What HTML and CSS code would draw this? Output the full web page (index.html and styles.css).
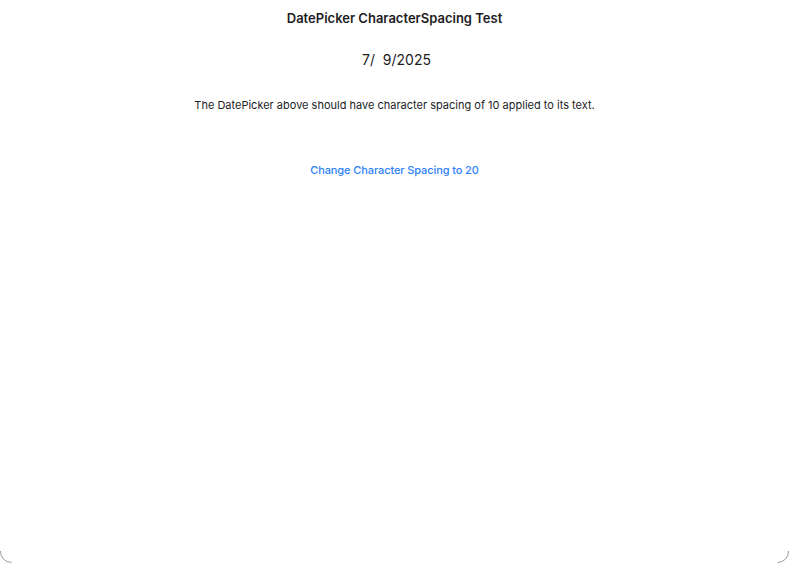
FILE: index.html
```html
<!DOCTYPE html>
<html lang="en">
<head>
<meta charset="utf-8">
<title>DatePicker CharacterSpacing Test</title>
<link rel="stylesheet" href="styles.css">
</head>
<body>
<div class="window">
  <main class="page">
    <h1 class="title">DatePicker CharacterSpacing Test</h1>
    <div class="date">7/&nbsp;&nbsp;9/2025</div>
    <p class="desc">The DatePicker above should have character spacing of 10 applied to its text.</p>
    <button class="link-btn" type="button">Change Character Spacing to 20</button>
  </main>
  <svg class="corner corner-left" width="12" height="12" viewBox="0 0 12 12"><path d="M0.5 0 A11 11 0 0 0 11.5 11.5" fill="none" stroke="#9a9a9a" stroke-width="1"/></svg>
  <svg class="corner corner-right" width="12" height="12" viewBox="0 0 12 12"><path d="M11.5 0 A11 11 0 0 1 0.5 11.5" fill="none" stroke="#9a9a9a" stroke-width="1"/></svg>
</div>
</body>
</html>
```
FILE: styles.css
```css
html, body {
  margin: 0;
  padding: 0;
  background: #ffffff;
}
body {
  font-family: Inter, "Noto Sans", "Liberation Sans", sans-serif;
  color: #1d1d1f;
}
.window {
  position: relative;
  width: 789px;
  height: 563px;
  overflow: hidden;
}
.page {
  display: flex;
  flex-direction: column;
  align-items: center;
  padding-top: 10px;
}
.title {
  margin: 0;
  font-size: 13px;
  font-weight: 600;
  line-height: 16px;
  letter-spacing: 0;
}
.date {
  margin-top: 25px;
  font-size: 14px;
  line-height: 18px;
  letter-spacing: 0;
  padding-left: 4px;
}
.desc {
  margin: 29px 0 0;
  font-size: 11px;
  line-height: 14px;
}
.link-btn {
  margin-top: 51px;
  border: none;
  background: none;
  padding: 0;
  font-family: inherit;
  font-size: 11px;
  font-weight: 500;
  line-height: 14px;
  letter-spacing: -0.1px;
  color: #2d7ff9;
  cursor: pointer;
}
.corner {
  position: absolute;
  bottom: 0;
}
.corner-left { left: 0; }
.corner-right { right: 0; }
```
